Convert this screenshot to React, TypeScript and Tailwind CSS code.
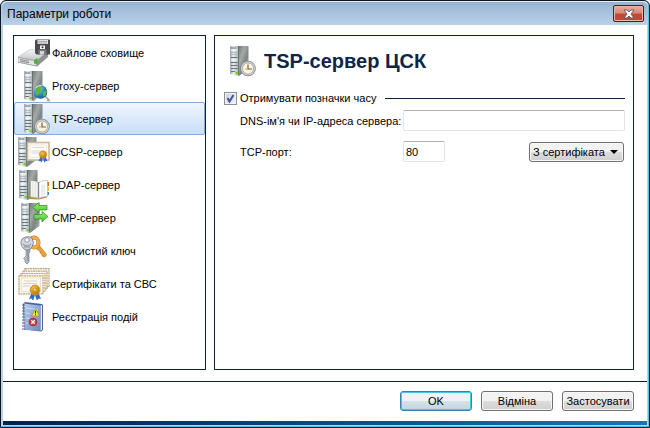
import { useState } from 'react'
import type { ReactNode } from 'react'

function Gradients() {
  return (
    <svg className="absolute h-0 w-0" aria-hidden="true">
      <defs>
        <linearGradient id="towerSide" x1="0" y1="0" x2="1" y2="1">
          <stop offset="0" stopColor="#6f7777" />
          <stop offset="0.35" stopColor="#a3aaa8" />
          <stop offset="0.6" stopColor="#7d8584" />
          <stop offset="1" stopColor="#b9bfbd" />
        </linearGradient>
        <linearGradient id="towerFront" x1="0" y1="0" x2="1" y2="0">
          <stop offset="0" stopColor="#9aa4a9" />
          <stop offset="0.4" stopColor="#e9edef" />
          <stop offset="1" stopColor="#a9b2b6" />
        </linearGradient>
        <radialGradient id="globe" cx="0.35" cy="0.3" r="0.8">
          <stop offset="0" stopColor="#a9e2fb" />
          <stop offset="0.5" stopColor="#2f8fce" />
          <stop offset="1" stopColor="#0d4a8c" />
        </radialGradient>
        <radialGradient id="gold" cx="0.4" cy="0.35" r="0.7">
          <stop offset="0" stopColor="#fbe08a" />
          <stop offset="0.6" stopColor="#dc9a1c" />
          <stop offset="1" stopColor="#b87410" />
        </radialGradient>
        <linearGradient id="greenArrow" x1="0" y1="0" x2="0" y2="1">
          <stop offset="0" stopColor="#9af06c" />
          <stop offset="1" stopColor="#48bd33" />
        </linearGradient>
        <linearGradient id="drive" x1="0" y1="0" x2="0" y2="1">
          <stop offset="0" stopColor="#f4f5f5" />
          <stop offset="1" stopColor="#c4c7c8" />
        </linearGradient>
        <linearGradient id="log" x1="0" y1="0" x2="1" y2="1">
          <stop offset="0" stopColor="#b9cdea" />
          <stop offset="1" stopColor="#6c8cc0" />
        </linearGradient>
      </defs>
    </svg>
  )
}

function Tower({ x = 0 }: { x?: number }) {
  return (
    <g transform={`translate(${x} 0)`}>
      <path d="M8 1L18.500 1V24L9 31z" fill="url(#towerSide)" />
      <path d="M0 1L8.500 1V31L0 29z" fill="url(#towerFront)" />
      <path
        d="M1 3h5M1 12.500h6.500M1 17.500h6.500M1 20.500h6.500M1 23.500h6.500M1 26.500h4"
        stroke="#6a777d"
        strokeWidth="1"
      />
      <path d="M1 7.500h6.500M1 9.500h6.500" stroke="#aab3b7" strokeWidth="0.8" />
      <path d="M1 5h6.500M1 15h6.500" stroke="#fff" strokeWidth="1" />
      <path d="M8.500 1v29.500" stroke="#59605f" strokeWidth="0.8" />
      <rect x="5.500" y="27" width="2.500" height="2" fill="#6ed813" />
    </g>
  )
}

function Medal({ x, y, s = 1 }: { x: number; y: number; s?: number }) {
  return (
    <g transform={`translate(${x} ${y}) scale(${s})`}>
      <path d="M-3 2l-3 7 2.500-.5L-2 11l2-6zM3 2l3 7-2.500-.5L2 11 0 5z" fill="#2e6bd0" />
      <circle r="5" fill="#c98514" strokeDasharray="1.500 1" stroke="#e2a834" />
      <circle r="4.200" fill="url(#gold)" />
      <circle r="2.200" fill="none" stroke="#b87a14" strokeWidth="0.7" />
    </g>
  )
}

function IconFrame({ children }: { children: ReactNode }) {
  return (
    <svg viewBox="0 0 32 32" className="h-8 w-8 shrink-0" aria-hidden="true">
      {children}
    </svg>
  )
}

function StorageIcon() {
  return (
    <IconFrame>
      <path d="M0 20L12 12.500l18 1.500v6L19 29.500 0 25.500z" fill="#8e9293" />
      <path d="M0 20l12-7.500L30 14 18.500 23.500z" fill="url(#drive)" stroke="#c4c7c8" strokeWidth="0.5" />
      <path d="M0 20.500l18.500 3.500v5L0 25z" fill="#e2e4e5" stroke="#8d9293" strokeWidth="0.5" />
      <path d="M2 22.500l9 1.800M2 24l9 1.800" stroke="#777" strokeWidth="0.8" />
      <path d="M16 26.500v-3.500l3.500-2v6z" fill="#42b52b" />
      <path d="M17 3.500l1-1h14v15H18.500L17 16z" fill="#4a4b4d" />
      <path d="M19.500 3h10.500v4H19.500z" fill="#dfdfe0" />
      <path d="M20.500 4.500h8.500M20.500 6h8.500" stroke="#8d8d8f" strokeWidth="0.6" />
      <path d="M20.500 12.500h8v5h-8z" fill="#77797b" />
      <path d="M22 8.500h5v3.500h-5z" fill="#f5f5f5" />
      <circle cx="24.500" cy="10.200" r="1" fill="#333" />
      <path d="M22 14h4v3.500h-4z" fill="#d4d5d6" />
    </IconFrame>
  )
}

function ProxyIcon() {
  return (
    <IconFrame>
      <Tower x={6} />
      <path d="M18 28l-3 3M27 26l5 5M29 30.500h3" stroke="#9aa2a8" strokeWidth="1.500" fill="none" />
      <circle cx="22.500" cy="22" r="6.800" fill="url(#globe)" />
      <path d="M18 18q3-3.500 6-2l-1 3 2 2-4 2-2 3-2-2zM25 22l4-2-1 5-3 2z" fill="#5bb443" />
      <path d="M17.500 18q3-3 6-2.500" stroke="#d9f3ff" fill="none" />
    </IconFrame>
  )
}

function TspIcon() {
  return (
    <IconFrame>
      <Tower x={6} />
      <circle cx="24" cy="23.500" r="7.800" fill="#83878d" />
      <circle cx="24" cy="23.500" r="7" fill="#cdd0d4" />
      <circle cx="24" cy="23.500" r="5.500" fill="#fcf3dc" stroke="#8b8f94" strokeWidth="0.6" />
      <path d="M24 19.500v4.500h4" fill="none" stroke="#69625a" strokeWidth="1.200" />
      <path d="M21 24h3" stroke="#e8a12c" />
    </IconFrame>
  )
}

function OcspIcon() {
  return (
    <IconFrame>
      <Tower x={0} />
      <rect x="9.500" y="6.500" width="21.500" height="17.500" fill="#fdfcf8" stroke="#cdb899" strokeWidth="1.600" />
      <rect x="12" y="9" width="16.500" height="12.500" fill="none" stroke="#e6d9c5" strokeWidth="0.6" />
      <path d="M14.500 11.500h11M13.500 15h13M13.500 17h8" stroke="#c9c7c6" strokeWidth="0.7" />
      <Medal x={25} y={18.500} s={0.75} />
    </IconFrame>
  )
}

function LdapIcon() {
  return (
    <IconFrame>
      <Tower x={1} />
      <path d="M11 12.500l9 1 9-2v17l-8 2-10-.5z" fill="#b98a4a" />
      <path d="M12.500 11.500q5 0 8 2v16q-3-1.500-8-1.500z" fill="#f4f4f2" stroke="#9e9e9c" strokeWidth="0.5" />
      <path d="M20.500 13.500q4-2.500 9-2v16q-5 0-9 2z" fill="#fff" stroke="#9e9e9c" strokeWidth="0.5" />
      <path d="M15 13v14.500M17.500 13v15" stroke="#d6d6d3" strokeWidth="0.6" />
      <path d="M20.500 13.500v15" stroke="#505860" strokeWidth="1.600" strokeDasharray="1 1" />
      <path d="M23 16l4-1v11l-4 1z" fill="#e9eef5" />
      <path d="M29.500 13H31v4h-1.500z" fill="#e3682d" />
      <path d="M29.500 18H31v4h-1.500z" fill="#edb92e" />
      <path d="M29.500 23H31v3h-1.500z" fill="#3e83d1" />
    </IconFrame>
  )
}

function CmpIcon() {
  return (
    <IconFrame>
      <Tower x={3} />
      <path d="M14.500 5.500l6.500-5v3h8v4.500h-8v3z" fill="url(#greenArrow)" stroke="#278c1d" strokeWidth="0.7" />
      <path d="M30 14.500l-6-5v3h-8V17h8v3z" fill="url(#greenArrow)" stroke="#278c1d" strokeWidth="0.7" />
    </IconFrame>
  )
}

function KeyIcon() {
  return (
    <IconFrame>
      <path d="M17 13l4-3 7.500 9.500-1.500 2.500-3-1v-2l-2-1v-2l-2-1z" fill="#e9a03a" stroke="#b56e14" strokeWidth="0.6" />
      <ellipse cx="16" cy="7.500" rx="4.500" ry="5" fill="none" stroke="#b96f15" strokeWidth="4" />
      <ellipse cx="16" cy="7.500" rx="4.500" ry="5" fill="none" stroke="#f2ad44" strokeWidth="3" />
      <path d="M8 14h4v3l-1 1v9l-2 2-2-2v-2l-1.500-1.500L8 21z" fill="#b5bbc7" stroke="#6e7684" strokeWidth="0.6" />
      <path d="M10 15v11" stroke="#606a7a" strokeWidth="0.7" />
      <path d="M4 4q5-4 10-1 3 5 0 9-4 5-8 2-5-5-2-10z" fill="#d1d5dd" stroke="#6e7684" strokeWidth="0.8" />
      <circle cx="9" cy="5" r="2.200" fill="#fff" stroke="#6e7684" strokeWidth="0.7" />
      <path d="M5 9q4 4 8 0M6 12h6" stroke="#858e9c" fill="none" />
    </IconFrame>
  )
}

function CertificatesIcon() {
  return (
    <IconFrame>
      {[0, 1, 2, 3].map((i) => (
        <rect
          key={i}
          x={7 - i * 2}
          y={0.7 + i * 2.4}
          width="24"
          height="18"
          fill="#fbf8ef"
          stroke="#bda582"
          strokeWidth="1.200"
          strokeDasharray="2 0.5"
        />
      ))}
      <rect x="3.200" y="10" width="19.500" height="13.500" fill="none" stroke="#ddd0b9" strokeWidth="0.6" />
      <path d="M6 13h13M5 15.500h14M5 18h7" stroke="#c6c4c0" strokeWidth="0.7" />
      <Medal x={17} y={22} />
    </IconFrame>
  )
}

function LogIcon() {
  return (
    <IconFrame>
      <path d="M5 3l2-2 17 2 1 1v25l-2 1.500-17-2z" fill="#47639a" />
      <path d="M6 2.500l16 2V30L6 28.500z" fill="url(#log)" />
      <path d="M22.500 4.500l1.500-.5v24.500L22.500 30z" fill="#e7edf7" />
      <path d="M8 7l12 1.500M8 12l4 .5M8 17l4 .5M8 22l2 .2" stroke="#dbe6f6" strokeWidth="0.8" />
      <path d="M4 4h3M4 7h3M4 10h3M4 13h3M4 16h3M4 19h3M4 22h3M4 25h3M4 28h3" stroke="#586a86" strokeWidth="1.100" />
      <path d="M17.500 7.500l4 7.500h-8z" fill="#ffe33d" stroke="#a18b18" strokeWidth="0.7" />
      <path d="M17.500 9.800v2.700M17.500 13.200v1" stroke="#222" strokeWidth="1" />
      <circle cx="15" cy="21" r="4" fill="#cf3a42" stroke="#8b1e26" strokeWidth="0.5" />
      <path d="M13.300 19.300l3.400 3.400M16.700 19.300l-3.400 3.400" stroke="#fff" strokeWidth="1.300" />
    </IconFrame>
  )
}

const sections = [
  { id: 'storage', label: 'Файлове сховище', icon: <StorageIcon /> },
  { id: 'proxy', label: 'Proxy-сервер', icon: <ProxyIcon /> },
  { id: 'tsp', label: 'TSP-сервер', icon: <TspIcon /> },
  { id: 'ocsp', label: 'OCSP-сервер', icon: <OcspIcon /> },
  { id: 'ldap', label: 'LDAP-сервер', icon: <LdapIcon /> },
  { id: 'cmp', label: 'CMP-сервер', icon: <CmpIcon /> },
  { id: 'key', label: 'Особистий ключ', icon: <KeyIcon /> },
  { id: 'certs', label: 'Сертифікати та СВС', icon: <CertificatesIcon /> },
  { id: 'log', label: 'Реєстрація подій', icon: <LogIcon /> },
]

const greyButton =
  'h-5 w-18 rounded-[3px] border border-[#707070] bg-linear-to-b from-[#f2f2f2] from-50% via-[#dddddd] via-50% to-[#cfcfcf] text-center leading-4 whitespace-nowrap shadow-[inset_0_0_0_1px_#f8f8f8]'

export default function App() {
  const [active, setActive] = useState('tsp')
  const [enabled, setEnabled] = useState(true)
  const [host, setHost] = useState('')
  const [port, setPort] = useState('80')

  return (
    <div className="flex min-h-screen flex-col rounded-t-md border border-[#10181e] bg-[#b9d1ea] pr-px pb-[2px] pl-px font-['Liberation_Sans',sans-serif] text-[11px] leading-4 text-black shadow-[inset_-1px_-1px_0_#56bfdf]">
      <Gradients />
      <header className="flex h-6 items-center justify-between rounded-t-md border-t border-[#e4eef8] bg-linear-to-b from-[#98b3d2] to-[#b9d1ea] pr-1 pl-[5px]">
        <span className="text-[12px]">Параметри роботи</span>
        <button
          type="button"
          aria-label="Закрити"
          className="flex h-[17px] w-[31px] items-center justify-center rounded-[2px] border border-[#4e1a1c] bg-linear-to-b from-[#e9a99b] from-0% via-[#d98b7c] via-45% to-[#bf4a36] to-55% shadow-[inset_0_0_0_1px_#eeb5a8]"
        >
          <svg viewBox="0 0 12 10" className="h-[10px] w-3" aria-hidden="true">
            <path
              d="M1 1h3l2 2 2-2h3L8 5l3 4H8L6 7 4 9H1l3-4z"
              fill="#fff"
              stroke="#535666"
              strokeWidth="0.9"
            />
          </svg>
        </button>
      </header>

      <div className="mr-px ml-px flex grow flex-col bg-white">
        <main className="flex grow gap-2 pt-[10px] pr-[13px] pb-[11px] pl-[10px]">
          <nav className="w-[193px] shrink-0 border border-[#0c2233]">
            {sections.map((section) => (
              <button
                key={section.id}
                type="button"
                onClick={() => setActive(section.id)}
                className={
                  'flex h-[33px] w-full items-center gap-[2px] rounded-[2px] border pl-[3px] text-left ' +
                  (section.id === active
                    ? 'border-[#84acdd] bg-linear-to-b from-[#f0f6fe] to-[#c9defa]'
                    : 'border-transparent')
                }
              >
                {section.icon}
                <span>{section.label}</span>
              </button>
            ))}
          </nav>

          <section className="grow border border-[#0c2240] pr-2 pl-[9px]">
            <div className="flex items-center gap-2 pt-[9px]">
              <TspIcon />
              <h1 className="text-[20px] leading-7 font-bold text-[#0c2548]">TSP-сервер ЦСК</h1>
            </div>

            <div className="flex items-center gap-[9px] pt-[13px]">
              <label className="flex items-center gap-[3px]">
                <span className="relative flex">
                  <input
                    type="checkbox"
                    checked={enabled}
                    onChange={(e) => setEnabled(e.target.checked)}
                    className="h-[13px] w-[13px] appearance-none border border-[#8e8f8f] bg-linear-to-br from-[#c9cfd8] to-[#f6f6f6] shadow-[inset_0_0_0_1px_#f4f4f4]"
                  />
                  {enabled && (
                    <svg viewBox="0 0 13 13" className="pointer-events-none absolute inset-0 h-[13px] w-[13px]">
                      <path d="M3.500 6l2 3.500L9.500 3" fill="none" stroke="#3d54a0" strokeWidth="2" />
                    </svg>
                  )}
                </span>
                <span>Отримувати позначки часу</span>
              </label>
              <div className="h-px grow bg-[#0c2240]" />
            </div>

            <div className="grid grid-cols-[163px_1fr] items-center gap-y-[10px] pt-1 pl-4">
              <label htmlFor="host" className="whitespace-nowrap">
                DNS-ім'я чи IP-адреса сервера:
              </label>
              <input
                id="host"
                type="text"
                value={host}
                onChange={(e) => setHost(e.target.value)}
                className="h-[21px] w-full rounded-[2px] border border-[#e0e3e8] border-t-[#abadb3] px-[3px]"
              />
              <label htmlFor="port">TCP-порт:</label>
              <div className="flex items-center justify-between">
                <input
                  id="port"
                  type="text"
                  value={port}
                  onChange={(e) => setPort(e.target.value)}
                  className="h-[21px] w-[42px] rounded-[2px] border border-[#e0e3e8] border-t-[#abadb3] px-[2px]"
                />
                <div className="relative mr-px flex">
                  <select
                    aria-label="Джерело параметрів"
                    className="h-5 w-[95px] appearance-none rounded-[3px] border border-[#707070] bg-linear-to-b from-[#f2f2f2] from-50% via-[#dddddd] via-50% to-[#cfcfcf] pl-[3px] leading-4 shadow-[inset_0_0_0_1px_#f8f8f8]"
                  >
                    <option>З сертифіката</option>
                  </select>
                  <svg
                    viewBox="0 0 8 4"
                    className="pointer-events-none absolute top-2 right-[6px] h-1 w-2"
                    aria-hidden="true"
                  >
                    <path d="M0 0h8L4 4z" fill="#000" />
                  </svg>
                </div>
              </div>
            </div>
          </section>
        </main>

        <footer className="flex justify-end gap-[9px] border-t border-[#0c2240] pt-[9px] pr-[13px] pb-[10px]">
          <button
            type="button"
            className="h-5 w-18 rounded-[3px] border border-[#3c7fb1] bg-linear-to-b from-[#edf3f6] from-50% via-[#d5e2e9] via-50% to-[#c5d5dd] text-center leading-4 shadow-[inset_0_0_0_1px_#46c6ee]"
          >
            OK
          </button>
          <button type="button" className={greyButton}>
            Відміна
          </button>
          <button type="button" className={greyButton}>
            Застосувати
          </button>
        </footer>
        <div className="h-1 bg-linear-to-r from-[#04234a] to-[#1078c4]" />
      </div>
    </div>
  )
}
